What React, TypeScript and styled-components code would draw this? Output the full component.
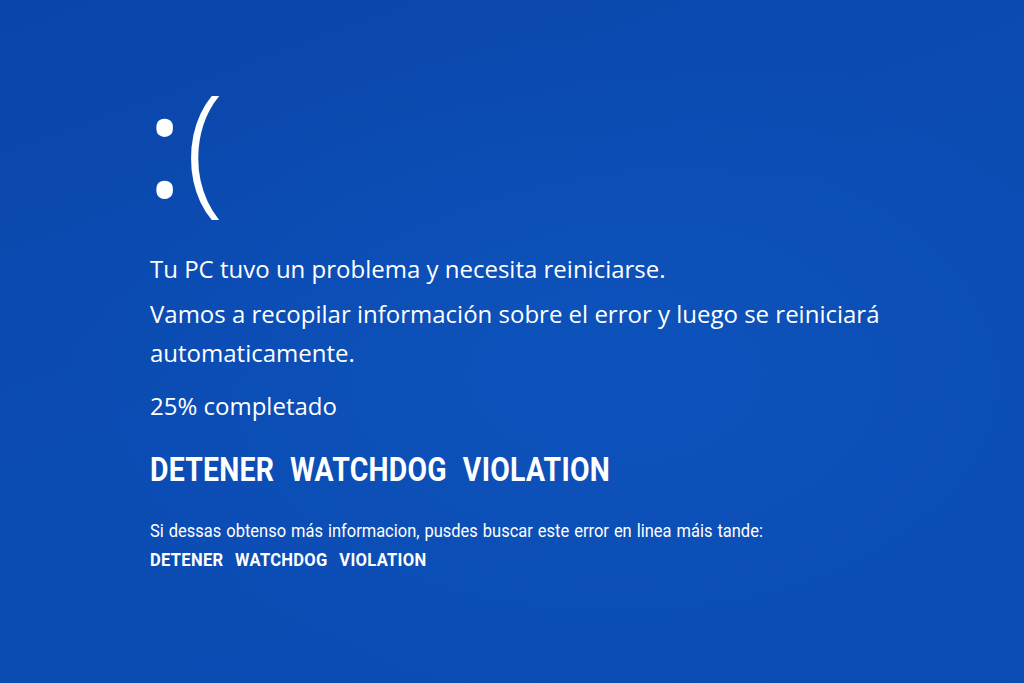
import React from 'react';
import styled, { createGlobalStyle } from 'styled-components';

const GlobalStyle = createGlobalStyle`
  html, body {
    margin: 0;
    padding: 0;
    height: 100%;
    overflow: hidden;
  }
  body {
    background: #0c4cb2;
  }
`;

const Screen = styled.main`
  width: 1024px;
  height: 683px;
  box-sizing: border-box;
  padding: 71px 0 0 150px;
  color: #ffffff;
  font-family: 'Open Sans', 'Noto Sans', sans-serif;
  background:
    radial-gradient(ellipse at 60% 55%, #0d52bb 0%, rgba(13, 82, 187, 0) 65%),
    linear-gradient(160deg, #0a46aa 0%, #0b4cb3 45%, #0b4cb5 100%);
  display: flex;
  flex-direction: column;
`;

const Frown = styled.div`
  font-family: 'Open Sans', sans-serif;
  font-weight: 300;
  font-size: 142px;
  line-height: 142px;
  height: 142px;
  margin-left: -4px;
  white-space: nowrap;
`;

const Eyes = styled.span`
  font-weight: 400;
  margin-right: 2px;
`;

const Message = styled.p<{ $gap?: number }>`
  margin: ${(p) => p.$gap ?? 0}px 0 0;
  font-size: 24px;
  line-height: 39px;
  font-weight: 400;
`;

const StopCode = styled.h1`
  margin: 27px 0 0;
  font-family: 'Roboto', sans-serif;
  font-weight: 700;
  font-size: 33px;
  line-height: 36px;
  letter-spacing: 0.3px;
  word-spacing: 10px;
  white-space: nowrap;
  transform: scaleX(0.86);
  transform-origin: left center;
`;

const Hint = styled.p`
  margin: 29px 0 0;
  font-family: 'Roboto', sans-serif;
  font-size: 18px;
  line-height: 28px;
  word-spacing: 1px;
  transform: scaleX(0.915);
  transform-origin: left center;
  white-space: nowrap;
`;

const SmallCode = styled.div`
  margin: 1px 0 0;
  font-family: 'Roboto', sans-serif;
  font-weight: 700;
  font-size: 18px;
  line-height: 28px;
  letter-spacing: 0.3px;
  word-spacing: 8px;
  white-space: nowrap;
  transform: scaleX(0.92);
  transform-origin: left center;
`;

export default function App() {
  return (
    <>
      <GlobalStyle />
      <Screen>
        <Frown>
          <Eyes>:</Eyes>(
        </Frown>
        <Message $gap={36}>Tu PC tuvo un problema y necesita reiniciarse.</Message>
        <Message $gap={6}>
          Vamos a recopilar información sobre el error y luego se reiniciará
          <br />
          automaticamente.
        </Message>
        <Message $gap={14}>25% completado</Message>
        <StopCode>DETENER WATCHDOG VIOLATION</StopCode>
        <Hint>Si dessas obtenso más informacion, pusdes buscar este error en linea máis tande:</Hint>
        <SmallCode>DETENER WATCHDOG VIOLATION</SmallCode>
      </Screen>
    </>
  );
}
